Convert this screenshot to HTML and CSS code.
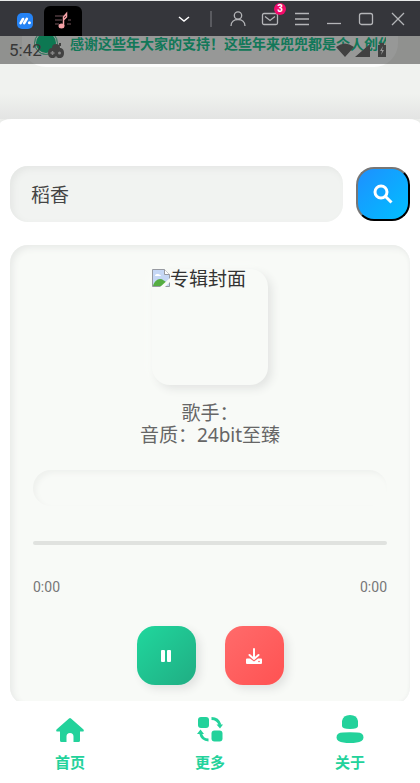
FILE: index.html
```html
<!DOCTYPE html>
<html lang="zh-CN">
<head>
<meta charset="utf-8">
<meta name="viewport" content="width=device-width, initial-scale=1">
<title>音乐</title>
<link rel="stylesheet" href="styles.css">
</head>
<body>
<header class="titlebar">
  <svg class="brand" viewBox="0 0 16 16" aria-hidden="true"><rect width="16" height="16" rx="5" fill="#2583f5"/><path d="M3.6 10.2 6 6M7.2 10.2 9.8 5.8" stroke="#fff" stroke-width="2.6" stroke-linecap="round"/><circle cx="12.4" cy="9.8" r="1.5" fill="#fff"/></svg>
  <div class="tab">
    <svg viewBox="0 0 18 18" aria-hidden="true"><path d="M1 4h9M1 8h7M1 12h4M14 8h3M13 12h4" stroke="#77565c"/><path d="M9.500 14V5l3-3.500v3.500l-3 3" fill="none" stroke="#f6a2a7" stroke-width="1.500"/><ellipse cx="7.500" cy="14" rx="3" ry="2.500" fill="#f6a2a7"/></svg>
  </div>
  <div class="window-tools">
    <button class="tool" aria-label="展开"><svg viewBox="0 0 18 18"><path class="bright" d="m4 7 5 4 5-4"/></svg></button>
    <span class="divider"></span>
    <button class="tool" aria-label="用户"><svg viewBox="0 0 18 18"><circle cx="9" cy="5.500" r="3.700"/><path d="M2 16c0-4 3-6.500 7-6.500s7 2.500 7 6.500"/></svg></button>
    <button class="tool" aria-label="消息"><svg viewBox="0 0 18 18"><rect x="1.500" y="3.500" width="15" height="11" rx="1.500"/><path d="m4 6.500 5 4 5-4"/></svg><span class="badge">3</span></button>
    <button class="tool" aria-label="菜单"><svg viewBox="0 0 18 18"><path d="M2 3.500h14M2 9h14M2 14.500h14"/></svg></button>
    <button class="tool" aria-label="最小化"><svg viewBox="0 0 18 18"><path d="M2 13.500h14"/></svg></button>
    <button class="tool" aria-label="最大化"><svg viewBox="0 0 18 18"><rect x="2.500" y="3.500" width="13" height="11" rx="2"/></svg></button>
    <button class="tool" aria-label="关闭"><svg viewBox="0 0 18 18"><path d="m3 3 12 12M15 3 3 15"/></svg></button>
  </div>
</header>
<div class="top">
  <div class="notice"><span class="dot"></span><p>感谢这些年大家的支持！这些年来兜兜都是个人创作</p></div>
  <div class="status">
    <span class="clock">5:42</span>
    <svg class="game" viewBox="0 0 18 18" aria-hidden="true"><path d="M12 2h2v3h-2z" fill="#414141"/><path d="M5 7a4 4 0 0 1 8 0h1q3 1 3 5t-3 5H4q-3-1-3-5t3-5z" fill="#414141"/><path d="M3.500 12h4M5.500 10v4" stroke="#858585" stroke-width="1.500"/><circle cx="12.500" cy="12" r="1.500" fill="#858585"/><path d="m7 17 2-2 2 2" fill="#858585"/></svg>
    <svg class="signals" viewBox="0 0 52 18" aria-hidden="true"><path d="M0 6q9-7 18 0L9 16zM19 16 34 3v13zM42 4h2V2h4v2h2v12h-8z" fill="#414141"/><path d="m47 5-3 5h2l-1 4 3-5h-2z" fill="#999"/></svg>
  </div>
</div>
<main class="sheet">
  <form class="search">
    <input type="text" aria-label="搜索歌曲" value="稻香">
    <button type="button" class="search-button" aria-label="搜索"><svg viewBox="0 0 20 20"><circle cx="8" cy="8" r="6"/><path d="m12.500 12.500 6 6"/></svg></button>
  </form>
  <section class="player">
    <div class="cover"><svg viewBox="0 0 18 18" aria-hidden="true"><path d="M.5.500h12l5 5v12H.500z" fill="#c5d7f5" stroke="#979aa1"/><path d="M12.500.500v5h5" fill="#fff" stroke="#979aa1"/><path d="M3 7c0-2 2-2 3-2s3 1 3 2z" fill="#fff"/><path d="M1 17c1-4 4-7 7-7s4 2 6 3v4z" fill="#55ad42"/><path d="M8 18 18 9v4l-5 5z" fill="#f8faf7"/></svg><span>专辑封面</span></div>
    <div class="info"><p>歌手：</p><p>音质：24bit至臻</p></div>
    <div class="lyric"></div>
    <div class="track"></div>
    <div class="times"><span>0:00</span><span>0:00</span></div>
    <div class="controls">
      <button class="play" aria-label="暂停"><svg viewBox="0 0 18 18"><rect x="4" y="3" width="4" height="12" rx="1"/><rect x="10" y="3" width="4" height="12" rx="1"/></svg></button>
      <button class="download" aria-label="下载"><svg viewBox="0 0 18 18"><path d="M9 2v10M4.500 8 9 12l4.500-4" fill="none" stroke="#fff" stroke-width="2" stroke-linecap="round"/><path d="M2 11.500h3l4 3 4-3h3a1 1 0 0 1 1 1V16a1 1 0 0 1-1 1H2a1 1 0 0 1-1-1v-3.500a1 1 0 0 1 1-1z"/><circle cx="14" cy="14.500" r=".8" fill="#ff5f60"/></svg></button>
    </div>
  </section>
</main>
<nav class="bottom-nav">
  <a href="#home"><svg viewBox="0 0 28 28"><path d="M13 .500Q14-.300 15 .500L27.500 11.500q1 2-1 2H24v9q0 1.500-1.500 1.500h-5V18.500a3.500 3.500 0 0 0-7 0V24h-5Q4 24 4 22.500v-9H1.500q-2 0-1-2z"/></svg>首页</a>
  <a href="#more"><svg viewBox="0 0 28 28"><rect x="2" y="-1" width="11" height="11" rx="3"/><rect x="15.500" y="12.500" width="11" height="11" rx="3"/><path d="M15.500.500Q22 .500 24 7M12.500 22Q6 22 4.500 15" fill="none" stroke="#23d29b" stroke-width="2.800"/><path d="M20.500 6.500h6.500l-3 4zM1 16h7l-3.500-4.500z"/></svg>更多</a>
  <a href="#about"><svg viewBox="0 0 28 28"><path d="M6 3Q7-3 14-3T22 3v5q0 3-8 3T6 8z"/><path d="M7 14.500Q14 13.800 21 14.500q6.500 0 6.500 5 0 2-2 3.500-4 2-11.500 2T2.500 23Q.5 21.500.5 19.500q0-5 6.500-5z"/></svg>关于</a>
</nav>
</body>
</html>
```
FILE: styles.css
```css
* { box-sizing: border-box; }
body {
  margin: 0;
  min-height: 100vh;
  display: flex;
  flex-direction: column;
  background: #f0f2ef;
  color: #333;
  font-family: "Noto Sans", "Noto Sans CJK SC", sans-serif;
  overflow-x: hidden;
}
p { margin: 0; }
button { padding: 0; }
svg { display: block; overflow: visible; }

.titlebar {
  height: 36px;
  flex: none;
  display: flex;
  align-items: center;
  padding-left: 17px;
  background: #35363b;
  border-top: 1px solid #e8eae9;
}
.brand { width: 16px; height: 16px; margin-top: 4px; }
.tab {
  align-self: flex-end;
  width: 38px;
  height: 30px;
  margin-left: 11px;
  display: grid;
  place-items: center;
  background: #000;
  border-radius: 6px 6px 0 0;
}
.tab svg { width: 18px; height: 18px; }
.window-tools {
  margin-left: auto;
  margin-right: 13px;
  display: flex;
  align-items: center;
  gap: 14px;
}
.tool {
  position: relative;
  width: 18px;
  height: 18px;
  border: 0;
  background: none;
}
.tool svg { width: 18px; height: 18px; fill: none; stroke: #b4b5b8; stroke-width: 1.300; }
.tool .bright { stroke: #fff; stroke-width: 1.500; }
.divider { width: 2px; height: 16px; margin: 0 3px; background: #5a5b60; }
.badge {
  position: absolute;
  top: -7px;
  right: -7px;
  width: 12px;
  height: 12px;
  border-radius: 50%;
  background: #f20b6b;
  color: #fff;
  font: bold 10px/12px "Liberation Sans", sans-serif;
  text-align: center;
}

.top {
  position: relative;
  height: 83px;
  flex: none;
  padding: 0 22px;
  background: linear-gradient(#f0f2ef 70%, #e3e4e3);
}
.notice {
  height: 31px;
  display: flex;
  align-items: flex-start;
  gap: 12px;
  padding: 0 12px;
  border-radius: 0 0 24px 24px;
  background: #fcfdfc;
  overflow: hidden;
}
.dot {
  flex: none;
  width: 24px;
  height: 24px;
  margin-top: -5px;
  border-radius: 50%;
  background: #16c889;
  border: 1px solid #67cba6;
  box-shadow: inset 0 0 0 1px #fff;
}
.notice p {
  flex: 1;
  overflow: hidden;
  white-space: nowrap;
  color: #20c994;
  font-size: 14px;
  font-weight: bold;
  line-height: 16px;
}
.status {
  position: absolute;
  inset: 0 0 auto;
  height: 28px;
  display: flex;
  align-items: center;
  padding: 0 32px 0 9px;
  background: rgba(0, 0, 0, .4);
}
.clock { font: 17px/28px Roboto, sans-serif; color: #373737; }
.game { width: 18px; height: 18px; margin-left: 5px; }
.signals { width: 52px; height: 18px; margin-left: auto; }

.sheet {
  flex: 1;
  padding: 47px 10px 0;
  background: #fff;
  border-radius: 12px 12px 0 0 / 5px 5px 0 0;
  box-shadow: 0 -1px 4px #e3e4e3;
}
.search { display: flex; align-items: center; gap: 13px; }
.search input {
  flex: 1;
  min-width: 0;
  height: 56px;
  padding: 0 21px;
  border: 0;
  border-radius: 18px;
  background: #f1f3f1;
  box-shadow: inset 3px 3px 6px #e5e7e5;
  color: #444;
  font: 19px "Noto Sans", "Noto Sans CJK SC", sans-serif;
}
.search-button {
  width: 54px;
  height: 54px;
  display: grid;
  place-items: center;
  border: 2px outset #000;
  border-color: #767676 #111 #111 #767676;
  border-radius: 18px;
  background: linear-gradient(135deg, #1e90ff, #00bfff);
}
.search-button svg { width: 20px; height: 20px; fill: none; stroke: #fff; stroke-width: 3; }

.player {
  height: 460px;
  margin-top: 23px;
  padding: 24px 23px 0;
  border-radius: 18px;
  background: #f8faf7;
  box-shadow: inset 3px 3px 6px #e8eae8, inset -1px -1px 3px #f2f4f2;
}
.cover {
  width: 116px;
  height: 116px;
  margin: 0 auto;
  display: flex;
  align-items: flex-start;
  border-radius: 18px;
  box-shadow: 4px 4px 8px #e3e5e3, -3px -3px 8px #fafcf9;
  color: #333;
  font-size: 19px;
  line-height: 20px;
  white-space: nowrap;
}
.cover svg { width: 18px; height: 18px; flex: none; }
.info {
  margin-top: 17px;
  color: #666;
  font-size: 19px;
  line-height: 22px;
  text-align: center;
}
.lyric {
  height: 36px;
  margin-top: 24px;
  border-radius: 18px;
  box-shadow: inset 3px 3px 5px #eff1ee;
}
.track { height: 4px; margin-top: 35px; border-radius: 2px; background: #e0e2df; }
.times {
  display: flex;
  justify-content: space-between;
  margin-top: 34px;
  color: #777;
  font: 14px/16px Roboto, sans-serif;
}
.controls { display: flex; justify-content: center; gap: 29px; margin-top: 31px; }
.controls button {
  width: 59px;
  height: 59px;
  display: grid;
  place-items: center;
  border: 0;
  border-radius: 18px;
  box-shadow: 4px 4px 8px #e1e3e1;
}
.controls svg { width: 18px; height: 18px; fill: #fff; }
.play { background: linear-gradient(135deg, #20d79d, #20ad83); }
.download { background: linear-gradient(135deg, #ff6b6b, #ff5252); }

.bottom-nav {
  position: fixed;
  inset: auto 0 0;
  height: 82px;
  display: flex;
  background: #fff;
}
.bottom-nav a {
  flex: 1;
  display: flex;
  flex-direction: column;
  align-items: center;
  gap: 7px;
  padding-top: 17px;
  color: #23d29b;
  font-size: 15px;
  font-weight: bold;
  line-height: 18px;
  text-decoration: none;
}
.bottom-nav svg { width: 28px; height: 28px; fill: #23d29b; }
```
